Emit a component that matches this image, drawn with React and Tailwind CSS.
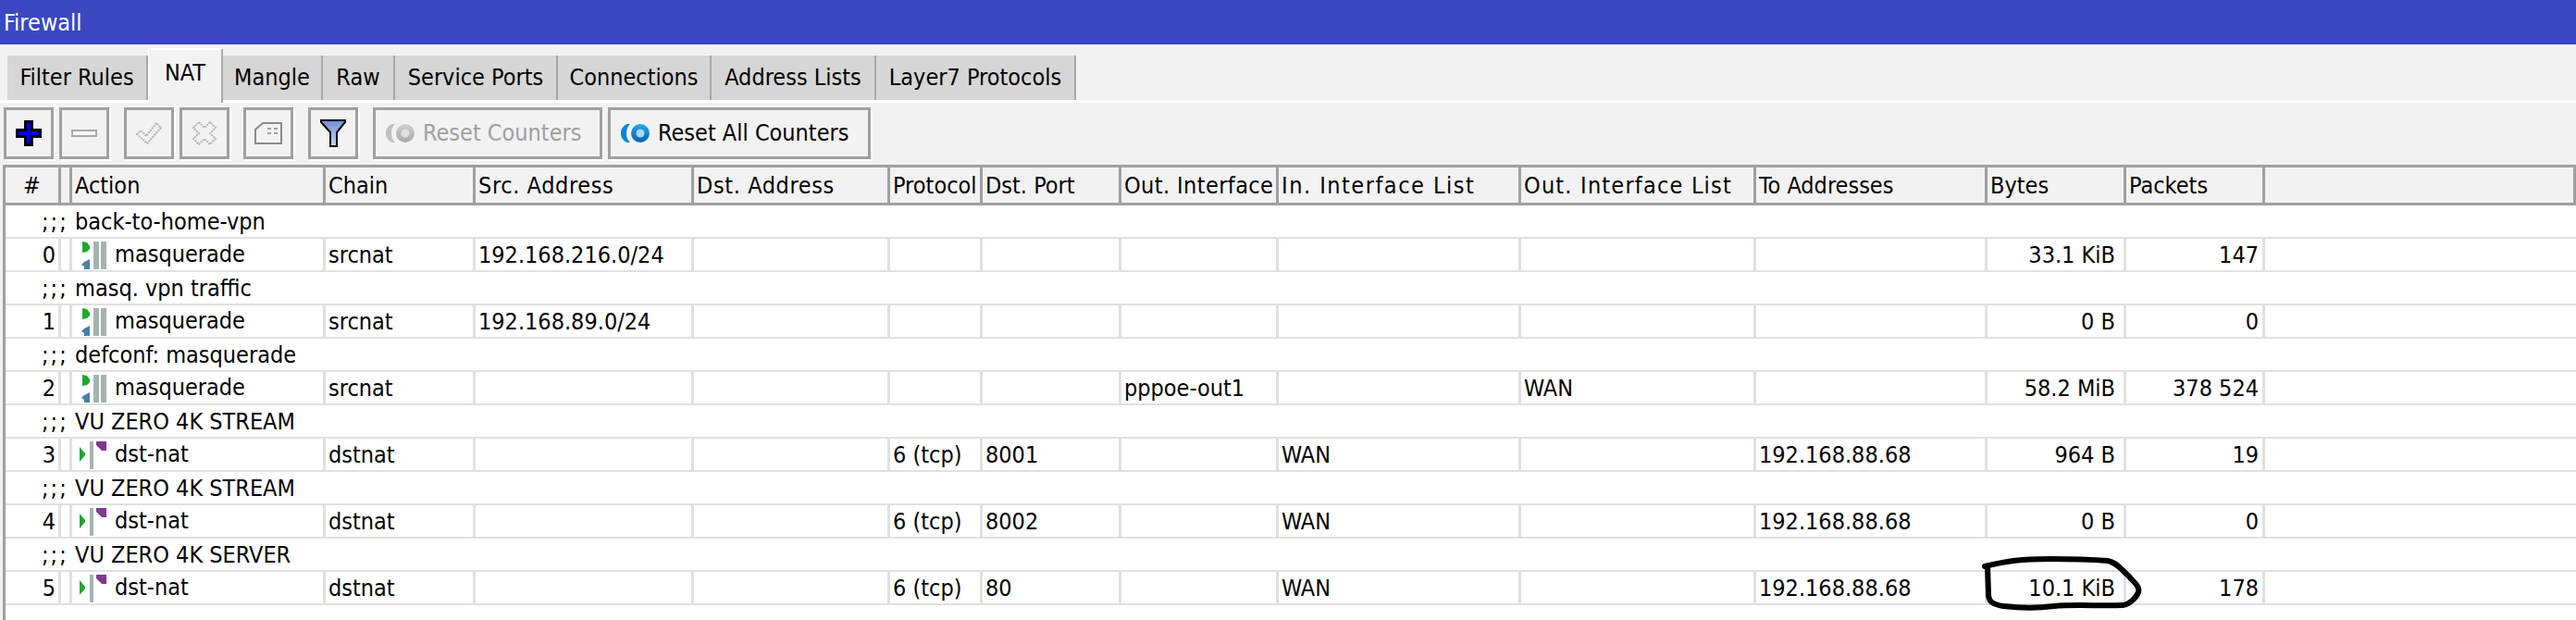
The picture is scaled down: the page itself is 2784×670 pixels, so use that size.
const FONT = "font-['DejaVu_Sans_Condensed','DejaVu_Sans',sans-serif]";

const tabs = [
  { label: "Filter Rules", w: "w-[152px]" },
  { label: "NAT", w: "w-[81px]", active: true },
  { label: "Mangle", w: "w-[108px]" },
  { label: "Raw", w: "w-[78px]" },
  { label: "Service Ports", w: "w-[176px]" },
  { label: "Connections", w: "w-[166px]" },
  { label: "Address Lists", w: "w-[178px]" },
  { label: "Layer7 Protocols", w: "w-[216px]" },
];

const GRID = "grid grid-cols-[60px_12px_274px_162px_236px_212px_100px_150px_170px_262px_254px_250px_150px_150px_1fr]";

const headers = [
  { t: "#", c: "text-center" },
  { t: "" },
  { t: "Action" },
  { t: "Chain" },
  { t: "Src. Address", c: "tracking-[0.6px]" },
  { t: "Dst. Address", c: "tracking-[0.6px]" },
  { t: "Protocol" },
  { t: "Dst. Port" },
  { t: "Out. Interface", c: "tracking-[0.4px]" },
  { t: "In. Interface List", c: "tracking-[1.5px]" },
  { t: "Out. Interface List", c: "tracking-[1.2px]" },
  { t: "To Addresses" },
  { t: "Bytes" },
  { t: "Packets" },
  { t: "", c: "border-r-0" },
];

const rows = [
  { comment: "back-to-home-vpn", n: 0, action: "masquerade", chain: "srcnat", src: "192.168.216.0/24", bytes: "33.1 KiB", packets: "147" },
  { comment: "masq. vpn traffic", n: 1, action: "masquerade", chain: "srcnat", src: "192.168.89.0/24", bytes: "0 B", packets: "0" },
  { comment: "defconf: masquerade", n: 2, action: "masquerade", chain: "srcnat", outIf: "pppoe-out1", outList: "WAN", bytes: "58.2 MiB", packets: "378 524" },
  { comment: "VU ZERO 4K STREAM", n: 3, action: "dst-nat", chain: "dstnat", proto: "6 (tcp)", port: "8001", inList: "WAN", to: "192.168.88.68", bytes: "964 B", packets: "19" },
  { comment: "VU ZERO 4K STREAM", n: 4, action: "dst-nat", chain: "dstnat", proto: "6 (tcp)", port: "8002", inList: "WAN", to: "192.168.88.68", bytes: "0 B", packets: "0" },
  { comment: "VU ZERO 4K SERVER", n: 5, action: "dst-nat", chain: "dstnat", proto: "6 (tcp)", port: "80", inList: "WAN", to: "192.168.88.68", bytes: "10.1 KiB", packets: "178" },
];

function MasqIcon() {
  return (
    <svg width="30" height="32" viewBox="0 0 30 32" className="shrink-0">
      <path d="M4 2 L9 3 L12 7 L12 10 L9 13 L4 14 Z" fill="#1ea82e" />
      <path d="M12 21 L12 32 L6 32 L6 29 L3 27 L6 24 Z" fill="#4a7fa8" />
      <rect x="16" y="2" width="6" height="30" fill="#a2b4b0" />
      <rect x="24" y="2" width="6" height="30" fill="#a2b4b0" />
    </svg>
  );
}

function DstIcon() {
  return (
    <svg width="30" height="32" viewBox="0 0 30 32" className="shrink-0">
      <path d="M1 8 L1 24 L7 17 L7 15 Z" fill="#1ea82e" />
      <rect x="12" y="2" width="4" height="30" fill="#a2b4b0" />
      <path d="M19 2 H30 V12 H25 L19 6 Z" fill="#7d3a8c" />
    </svg>
  );
}

function ToolBtn({ w = "w-[54px]", disabled, children, mr = "mr-[6px]" }) {
  return (
    <button className={`${w} ${mr} h-[56px] shrink-0 flex items-center justify-center border-[3px] border-[#a0a0a0] bg-[#f2f2f2] shadow-[2px_2px_0_#ffffff] ${disabled ? "text-[#a0a0a0]" : "text-black"}`}>
      {children}
    </button>
  );
}

function ResetIcon({ gray, id }) {
  const c1 = gray ? "#a8a8a8" : "#0a5fb0";
  const c2 = gray ? "#d0d0d0" : "#24a8e8";
  const inner = gray ? "#e0e0e0" : "#a6d8f4";
  const arc = gray ? "#c0c0c0" : "#0c84d8";
  return (
    <svg width="32" height="22" viewBox="0 0 32 22" className="shrink-0">
      <defs>
        <linearGradient id={id} x1="0" x2="0" y1="0" y2="1">
          <stop offset="0" stopColor={c2} />
          <stop offset="1" stopColor={c1} />
        </linearGradient>
      </defs>
      <path d="M7 1 C2 3 0 7 0 11 C0 15 2 19 7 21 L10 21 C7 18 6 15 6 11 C6 7 7 4 10 1 Z" fill={arc} />
      <circle cx="21" cy="11" r="10" fill={`url(#${id})`} />
      <circle cx="21" cy="11" r="4.5" fill={inner} />
    </svg>
  );
}

function Cell({ children, align = "", last }) {
  return (
    <div className={`h-[34px] leading-[36px] px-[3px] whitespace-nowrap overflow-hidden ${last ? "" : "border-r-[3px] border-[#e0e0e0]"} ${align}`}>
      {children}
    </div>
  );
}

export default function App() {
  return (
    <div className={`relative w-[2784px] h-[670px] overflow-hidden bg-[#f2f2f2] text-[25px] font-normal text-black ${FONT}`}>
      <div className="h-[48px] bg-[#3b48c1] text-white pl-[4px] leading-[50px]">Firewall</div>

      <div className="flex items-end h-[63px] pl-[8px] border-b-[3px] border-white">
        {tabs.map((t) =>
          t.active ? (
            <div key={t.label} className={`${t.w} h-[59px] -mb-[3px] pt-[6px] flex justify-center shrink-0 bg-[#f2f2f2] border-t-[2px] border-l-[1px] border-t-white border-l-white border-r-[2px] border-r-[#a8a8a8] z-10`}>
              {t.label}
            </div>
          ) : (
            <div key={t.label} className={`${t.w} h-[48px] bg-[#d6d6d6] border-r-[2px] border-[#a8a8a8] flex items-center justify-center shrink-0`}>
              {t.label}
            </div>
          )
        )}
      </div>

      <div className="flex h-[67px] pl-[4px] pt-[5px]">
        <ToolBtn>
          <svg width="28" height="28" viewBox="0 0 28 28">
            <path d="M9 0 H19 V9 H28 V19 H19 V28 H9 V19 H0 V9 H9 Z" fill="#000" />
            <path d="M12 3 H16 V12 H25 V16 H16 V25 H12 V16 H3 V12 H12 Z" fill="#0000f0" />
          </svg>
        </ToolBtn>
        <ToolBtn mr="mr-[16px]" disabled>
          <svg width="28" height="8" viewBox="0 0 28 8">
            <rect x="1" y="1" width="26" height="6" fill="#f6f6f6" stroke="#a8a8a8" strokeWidth="2" />
          </svg>
        </ToolBtn>
        <ToolBtn disabled>
          <svg width="28" height="24" viewBox="0 0 28 24">
            <path d="M1 13 L5 9 L11 15 L22 1 L27 6 L12 23 Z" fill="none" stroke="#b4b4b4" strokeWidth="2" strokeDasharray="2 1" />
          </svg>
        </ToolBtn>
        <ToolBtn mr="mr-[15px]" disabled>
          <svg width="26" height="26" viewBox="0 0 26 26">
            <path d="M7 1 L13 7 L19 1 L25 7 L19 13 L25 19 L19 25 L13 19 L7 25 L1 19 L7 13 L1 7 Z" fill="none" stroke="#b4b4b4" strokeWidth="2" strokeDasharray="2 1" />
          </svg>
        </ToolBtn>
        <ToolBtn mr="mr-[16px]">
          <svg width="30" height="26" viewBox="0 0 30 26">
            <path d="M1 24 V9 L9 2 H29 V24 Z" fill="#f2f2f2" stroke="#8a8a8a" strokeWidth="2" />
            <path d="M14 8 H18 M21 8 H25 M14 13 H18 M21 13 H25" stroke="#a0a0a0" strokeWidth="2" />
          </svg>
        </ToolBtn>
        <ToolBtn mr="mr-[16px]">
          <svg width="28" height="30" viewBox="0 0 28 30">
            <defs>
              <linearGradient id="fnl" x1="0" x2="0" y1="0" y2="1">
                <stop offset="0" stopColor="#6f8ed8" />
                <stop offset="1" stopColor="#c8d4ee" />
              </linearGradient>
            </defs>
            <path d="M1 1 H27 V3 L18 14 V29 H11 V14 L1 3 Z" fill="url(#fnl)" stroke="#000" strokeWidth="2" />
          </svg>
        </ToolBtn>
        <ToolBtn w="w-[248px]" disabled>
          <div className="flex items-center gap-[8px] w-full pl-[11px]">
            <ResetIcon gray id="rg" />
            <span>Reset Counters</span>
          </div>
        </ToolBtn>
        <ToolBtn w="w-[284px]">
          <div className="flex items-center gap-[8px] w-full pl-[11px]">
            <ResetIcon id="rb" />
            <span>Reset All Counters</span>
          </div>
        </ToolBtn>
      </div>

      <div className="ml-[3px] border-l-[3px] border-[#a0a0a0] bg-white h-[492px]">
        <div className={`${GRID} h-[44px] bg-[#f2f2f2] border-y-[3px] border-[#a0a0a0]`}>
          {headers.map((h, i) => (
            <div key={i} className={`h-[38px] leading-[40px] px-[3px] whitespace-nowrap overflow-hidden border-r-[3px] border-[#a0a0a0] ${h.c || ""}`}>
              {h.t}
            </div>
          ))}
        </div>
        {rows.map((r) => (
          <div key={r.n}>
            <div className="h-[36px] leading-[36px] border-b-[2px] border-[#e0e0e0] flex whitespace-pre pl-[39px]">
              <span className="w-[36px] tracking-[2px]">;;;</span>
              <span>{r.comment}</span>
            </div>
            <div className={`${GRID} h-[36px] border-b-[2px] border-[#e0e0e0]`}>
              <Cell align="text-right pr-[3px]">{r.n}</Cell>
              <Cell />
              <div className="h-[34px] pl-[7px] flex items-center gap-[9px] border-r-[3px] border-[#e0e0e0] leading-[36px]">
                {r.action === "masquerade" ? <MasqIcon /> : <DstIcon />}
                <span>{r.action}</span>
              </div>
              <Cell>{r.chain}</Cell>
              <Cell>{r.src}</Cell>
              <Cell />
              <Cell>{r.proto}</Cell>
              <Cell>{r.port}</Cell>
              <Cell>{r.outIf}</Cell>
              <Cell>{r.inList}</Cell>
              <Cell>{r.outList}</Cell>
              <Cell>{r.to}</Cell>
              <Cell align="text-right pr-[9px]">{r.bytes}</Cell>
              <Cell align="text-right pr-[4px]">{r.packets}</Cell>
              <Cell last />
            </div>
          </div>
        ))}
      </div>

      <svg className="absolute left-[2130px] top-[590px] pointer-events-none" width="200" height="80" viewBox="2130 590 200 80" fill="none">
        <path d="M2145 612 C2170 606 2185 604 2215 604 C2240 604 2265 605 2278 606 C2288 608 2293 616 2300 622 C2307 630 2313 634 2311 640 C2309 646 2300 654 2294 654 C2270 655 2240 653 2220 655 C2205 657 2190 658 2165 655 C2153 653 2149 650 2149 642 L2148 612" stroke="#000" strokeWidth="6" strokeLinecap="round" strokeLinejoin="round" />
      </svg>
    </div>
  );
}
